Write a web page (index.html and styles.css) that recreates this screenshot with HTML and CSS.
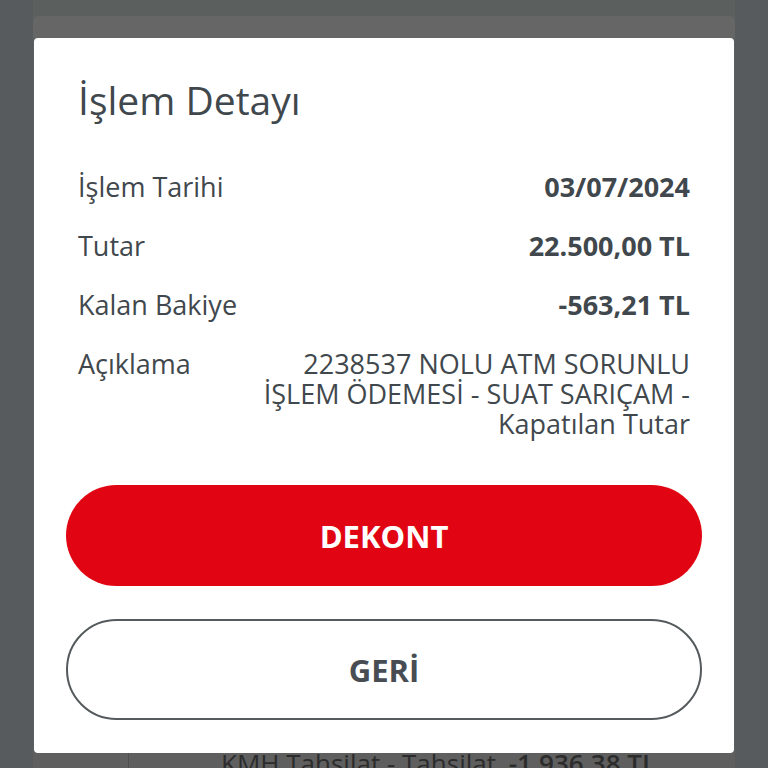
FILE: index.html
```html
<!DOCTYPE html>
<html lang="tr">
<head>
    <meta charset="UTF-8">
    <meta name="viewport" content="width=device-width, initial-scale=1.0">
    <title>İşlem Detayı</title>
    <link rel="stylesheet" href="styles.css">
</head>
<body>
    <div class="page">
        <div class="page-top"></div>
        <div class="page-card">
            <div class="card-head"></div>
            <div class="card-body"></div>
            <div class="list-row">
                <div class="list-side"></div>
                <div class="list-text">KMH Tahsilat - Tahsilat <b>-1.936,38 TL</b></div>
            </div>
        </div>
    </div>

    <div class="modal">
        <h1 class="modal-title">İşlem Detayı</h1>
        <div class="details">
            <div class="detail-row">
                <span class="label">İşlem Tarihi</span>
                <span class="value">03/07/2024</span>
            </div>
            <div class="detail-row">
                <span class="label">Tutar</span>
                <span class="value">22.500,00 TL</span>
            </div>
            <div class="detail-row">
                <span class="label">Kalan Bakiye</span>
                <span class="value">-563,21 TL</span>
            </div>
            <div class="detail-row">
                <span class="label">Açıklama</span>
                <span class="value desc">2238537 NOLU ATM SORUNLU İŞLEM ÖDEMESİ - SUAT SARIÇAM - Kapatılan Tutar</span>
            </div>
        </div>
        <div class="actions">
            <button class="btn btn-primary">DEKONT</button>
            <button class="btn btn-outline">GERİ</button>
        </div>
    </div>
</body>
</html>
```

FILE: styles.css
```css
body {
    margin: 0;
    padding: 0;
    width: 768px;
    height: 768px;
    overflow: hidden;
    background-color: #575b5d;
    font-family: "Open Sans", Lato, sans-serif;
    position: relative;
}

.page {
    display: flex;
    flex-direction: column;
    height: 768px;
    padding: 0 33px;
}

.page-top {
    height: 16px;
    background-color: #5b605f;
}

.page-card {
    flex: 1;
    display: flex;
    flex-direction: column;
    background-color: #5e6162;
}

.card-head {
    height: 22px;
    background-color: #666666;
    border-radius: 6px 6px 0 0;
}

.card-body {
    flex: 1;
}

.list-row {
    display: flex;
    height: 17px;
    background-color: #5f5f5f;
    overflow: hidden;
}

.list-side {
    width: 95px;
    border-right: 1px solid #4f4f4f;
}

.list-text {
    padding-left: 92px;
    font-size: 26px;
    line-height: 30px;
    margin-top: -3px;
    color: #2c2c2c;
    white-space: nowrap;
}

.list-text b {
    padding-left: 6px;
    font-weight: 600;
}

/* modal */
.modal {
    position: absolute;
    top: 38px;
    left: 34px;
    width: 700px;
    box-sizing: border-box;
    padding: 40px 32px 33px;
    background-color: #fff;
    border-radius: 4px;
}

.modal-title {
    margin: 0 0 50px;
    padding-left: 12px;
    font-size: 39px;
    line-height: 44px;
    font-weight: 500;
    color: #41484d;
}

.details {
    display: flex;
    flex-direction: column;
    gap: 29px;
    padding: 0 12px;
}

.detail-row {
    display: flex;
    justify-content: space-between;
    align-items: flex-start;
    font-size: 27px;
    line-height: 30px;
    color: #41484d;
}

.label {
    white-space: nowrap;
}

.value {
    font-weight: 700;
    text-align: right;
}

.value.desc {
    font-weight: 400;
    max-width: 458px;
}

.actions {
    display: flex;
    flex-direction: column;
    gap: 33px;
    margin-top: 46px;
}

.btn {
    height: 101px;
    border-radius: 51px;
    font-family: "Open Sans", Lato, sans-serif;
    font-size: 31px;
    font-weight: 700;
    cursor: pointer;
}

.btn-primary {
    background-color: #e10513;
    color: #fff;
    border: none;
}

.btn-outline {
    background-color: #fff;
    color: #474d52;
    border: 2px solid #555a5d;
}
```
